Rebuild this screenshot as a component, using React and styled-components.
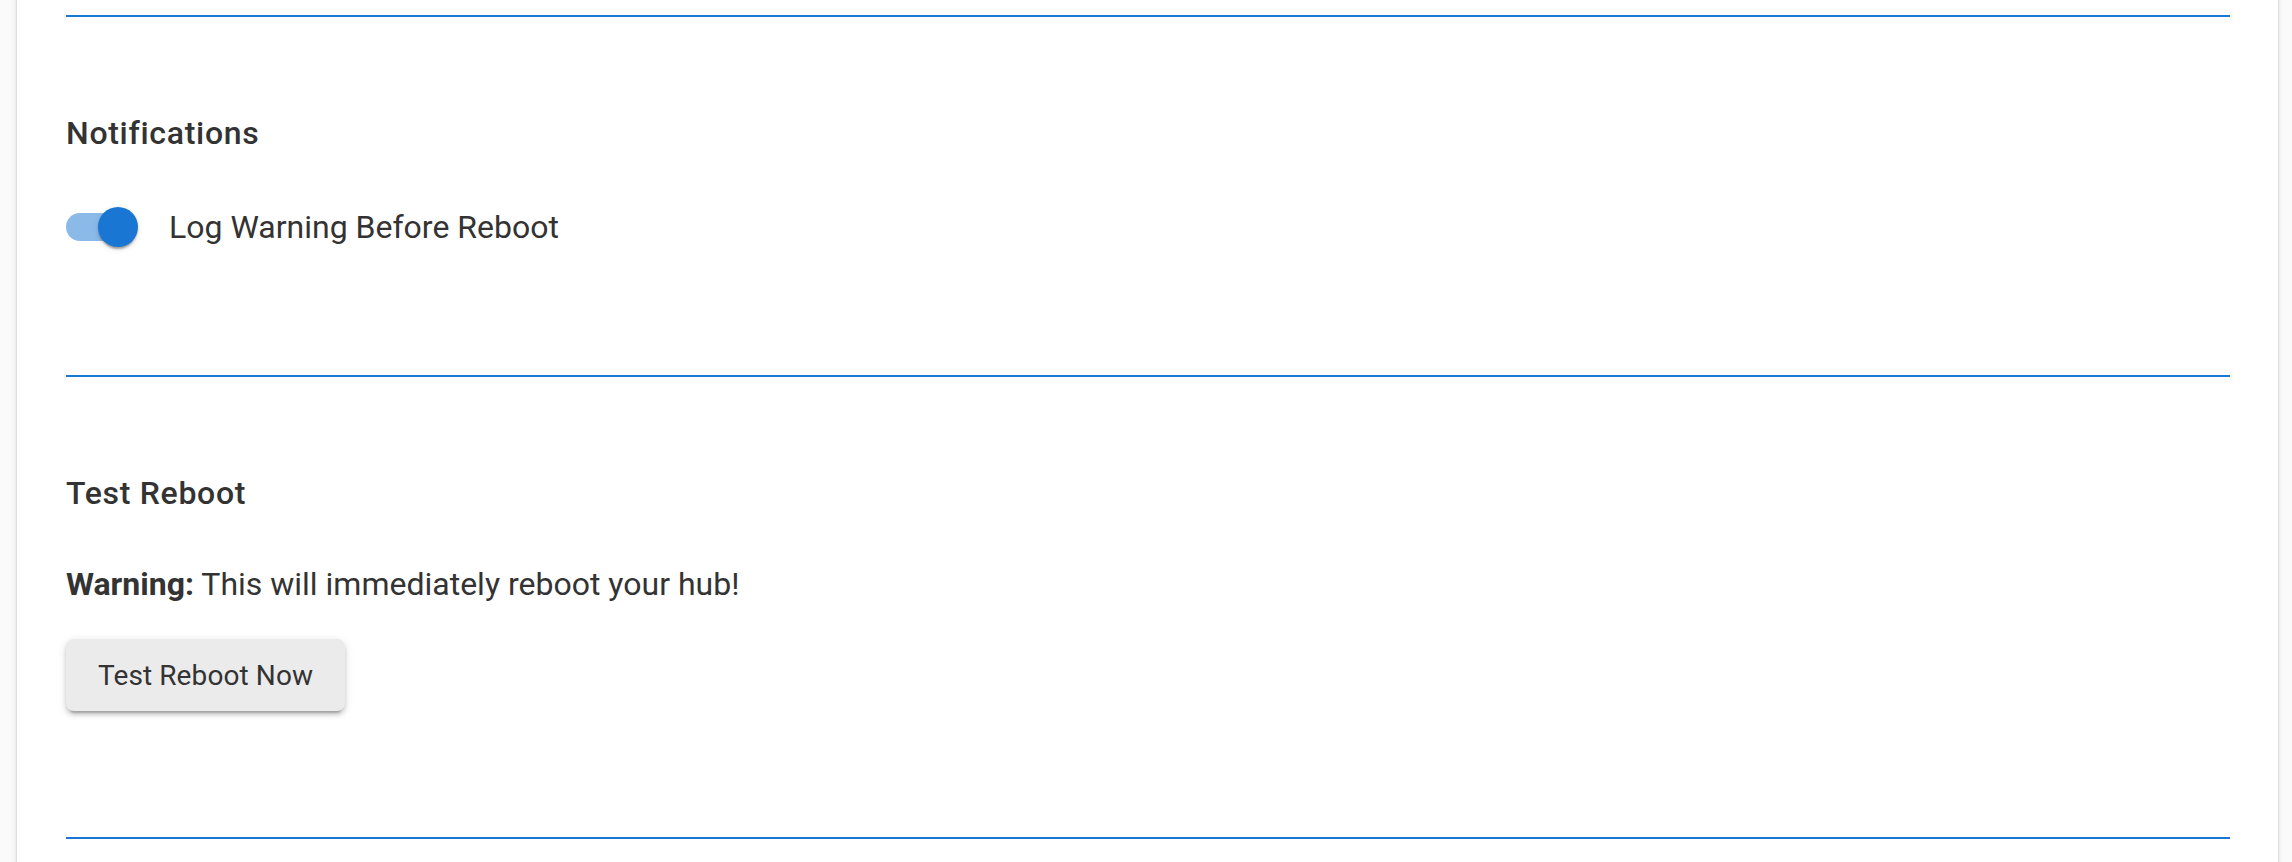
import React from "react";
import styled, { createGlobalStyle } from "styled-components";

const GlobalStyle = createGlobalStyle`
  html, body {
    margin: 0;
    padding: 0;
    background: #fafafa;
    font-family: Roboto, "Liberation Sans", Arial, sans-serif;
    color: #333333;
  }
  * { box-sizing: border-box; }
`;

const Page = styled.div`
  height: 862px;
  overflow: hidden;
  padding: 0 14px 0 17px;
`;

const Card = styled.div`
  background: #ffffff;
  min-height: 100%;
  margin-top: -20px;
  padding: 35px 48px 40px 49px;
  box-shadow: 0 2px 2px -1px rgba(0, 0, 0, 0.2), 0 1px 2px 0 rgba(0, 0, 0, 0.14),
    0 1px 6px 0 rgba(0, 0, 0, 0.12);
`;

const Divider = styled.hr`
  margin: 0;
  border: none;
  height: 2px;
  background: #1976d2;
`;

const Section = styled.section`
  padding-top: 92px;
  padding-bottom: ${(p) => p.$bottom}px;
  display: flex;
  flex-direction: column;
  align-items: flex-start;
`;

const Title = styled.h6`
  margin: 0 0 ${(p) => p.$gap}px;
  font-size: 32px;
  line-height: 48px;
  font-weight: 500;
  letter-spacing: 0.7px;
  color: #333333;
`;

const SwitchRow = styled.label`
  display: flex;
  align-items: center;
  height: 48px;
  cursor: pointer;
`;

const SwitchBox = styled.span`
  position: relative;
  width: 72px;
  height: 48px;
  flex: none;
`;

const Track = styled.span`
  position: absolute;
  left: 0;
  top: 10px;
  width: 68px;
  height: 28px;
  border-radius: 14px;
  background: ${(p) => (p.$on ? "#8cbae8" : "#bdbdbd")};
`;

const Thumb = styled.span`
  position: absolute;
  top: 4px;
  left: ${(p) => (p.$on ? 32 : 0)}px;
  width: 40px;
  height: 40px;
  border-radius: 50%;
  background: ${(p) => (p.$on ? "#1976d2" : "#fafafa")};
  box-shadow: 0 4px 2px -2px rgba(0, 0, 0, 0.2), 0 2px 2px 0 rgba(0, 0, 0, 0.14),
    0 2px 6px 0 rgba(0, 0, 0, 0.12);
`;

const Label = styled.span`
  margin-left: 31px;
  font-size: 32px;
  line-height: 48px;
  font-weight: 400;
  color: #333333;
`;

const Text = styled.p`
  margin: 0 0 31px;
  font-size: 32px;
  line-height: 48px;
  font-weight: 400;
  color: #333333;
`;

const Strong = styled.b`
  font-weight: 700;
`;

const Button = styled.button`
  height: 72px;
  padding: 0 32px;
  border: none;
  border-radius: 8px;
  background: #ebebeb;
  color: #333333;
  font-family: Roboto, "Liberation Sans", Arial, sans-serif;
  font-size: 28px;
  font-weight: 400;
  letter-spacing: 0.1px;
  cursor: pointer;
  box-shadow: 0 6px 2px -4px rgba(0, 0, 0, 0.2), 0 4px 4px 0 rgba(0, 0, 0, 0.14),
    0 2px 10px 0 rgba(0, 0, 0, 0.12);
`;

export default function App() {
  const [on, setOn] = React.useState(true);
  return (
    <>
      <GlobalStyle />
      <Page>
        <Card>
          <Divider />
          <Section $bottom={124}>
            <Title $gap={46}>Notifications</Title>
            <SwitchRow onClick={() => setOn(!on)}>
              <SwitchBox>
                <Track $on={on} />
                <Thumb $on={on} />
              </SwitchBox>
              <Label>Log Warning Before Reboot</Label>
            </SwitchRow>
          </Section>
          <Divider />
          <Section $bottom={126}>
            <Title $gap={43}>Test Reboot</Title>
            <Text>
              <Strong>Warning:</Strong> This will immediately reboot your hub!
            </Text>
            <Button>Test Reboot Now</Button>
          </Section>
          <Divider />
        </Card>
      </Page>
    </>
  );
}
